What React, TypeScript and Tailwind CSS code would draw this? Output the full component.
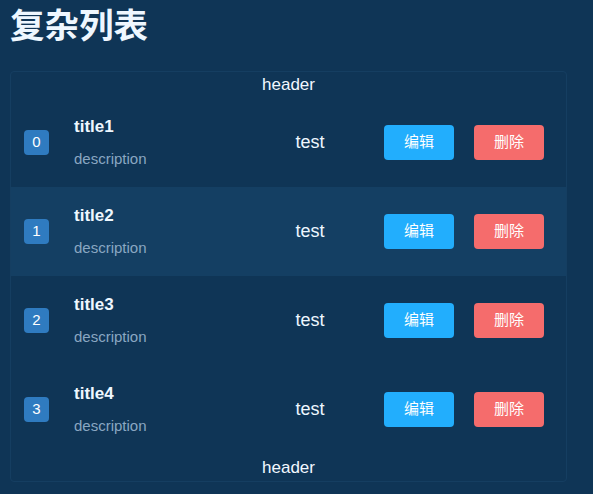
const items = [
  { title: "title1", description: "description" },
  { title: "title2", description: "description" },
  { title: "title3", description: "description" },
  { title: "title4", description: "description" },
];

const font = "font-['Liberation_Sans','Noto_Sans_CJK_SC',sans-serif]";

export default function App() {
  return (
    <div className={`min-h-[494px] w-[593px] bg-[#0f3556] px-[10px] pt-[2px] ${font}`}>
      <h1 className="text-[34.5px] font-bold leading-[48px] text-[#eef7ff]">复杂列表</h1>

      <div className="mt-[21px] w-[557px] rounded border border-[#153e61]">
        <div className="h-[26px] pt-[2px] text-center text-[17px] leading-[22px] text-[#f2f8ff]">header</div>

        {items.map((item, index) => (
          <div
            key={index}
            className={`flex h-[89px] items-center pl-[13px] pr-[22px] ${
              index === 1 ? "bg-[#143f63]" : ""
            }`}
          >
            <span className="flex h-[25px] w-[25px] items-center justify-center rounded bg-[#2f7bc0] text-[15px] text-white">
              {index}
            </span>
            <div className="ml-[25px] flex flex-1 flex-col gap-[9px]">
              <p className="text-[17px] font-bold leading-[24px] text-[#eef7ff]">{item.title}</p>
              <p className="text-[15px] leading-[22px] text-[#8aa7c2]">{item.description}</p>
            </div>
            <p className="w-[100px] text-center text-[18px] text-[#eef7ff]">test</p>
            <button className="ml-[24px] h-[35px] w-[70px] rounded bg-[#22aefd] text-[15px] text-white">
              编辑
            </button>
            <button className="ml-[20px] h-[35px] w-[70px] rounded bg-[#f56c6c] text-[15px] text-white">
              删除
            </button>
          </div>
        ))}

        <div className="h-[27px] pt-[3px] text-center text-[17px] leading-[22px] text-[#f2f8ff]">header</div>
      </div>
    </div>
  );
}
